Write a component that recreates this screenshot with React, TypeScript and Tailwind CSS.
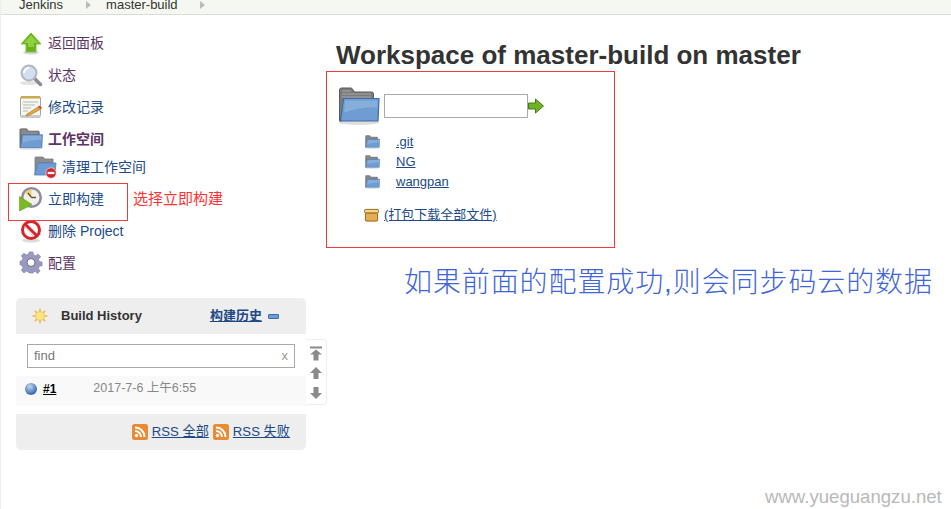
import { ReactNode } from "react";

const font = "font-['Liberation_Sans','Noto_Sans_CJK_SC',sans-serif]";

function FolderIcon({ className }: { className: string }) {
  return (
    <svg viewBox="0 0 42 38" className={className}>
      <ellipse cx="21" cy="35.500" rx="20" ry="2.500" fill="#dedede" />
      <path d="M1.500 34V3q0-2 2-2h10l3 4h17q2 0 2 2v6H6L4 34z" fill="#7b7b7d" stroke="#5a5a5a" />
      <path d="M4 4h9M4 7h29M4 10h29" stroke="#a8a8a8" />
      <path d="M5.500 11.500h35.500l-1 22.500H2.500z" fill="#6f9dd3" stroke="#3d6da8" strokeWidth="1.200" />
      <path d="M7 13.500h32.500l-.3 7q-15-1-33 5z" fill="#86aedb" />
    </svg>
  );
}

function UpArrow() {
  return (
    <svg viewBox="0 0 24 24" className="w-6 h-6">
      <ellipse cx="12" cy="21.500" rx="8" ry="2" fill="#d9d9d9" />
      <path d="M12 2 22 13h-5v8H7v-8H2z" fill="#6ab01c" stroke="#7cc136" />
      <path d="M12 4 19 12h-4v4H9v-4H5z" fill="#8fd13f" />
    </svg>
  );
}

function SearchIcon() {
  return (
    <svg viewBox="0 0 24 24" className="w-6 h-6">
      <ellipse cx="10" cy="20" rx="9" ry="2" fill="#e3e3e3" />
      <path d="m15 15 6.500 6.500" stroke="#8a8a92" strokeWidth="3.500" strokeLinecap="round" />
      <circle cx="10" cy="10" r="7.500" fill="#cfe0f2" stroke="#b4b7bf" strokeWidth="2" />
      <path d="M5 10a5 5 0 0 1 5-5" stroke="#fff" strokeWidth="2" fill="none" />
    </svg>
  );
}

function NotepadIcon() {
  return (
    <svg viewBox="0 0 24 24" className="w-6 h-6">
      <rect x="1.500" y="2" width="20" height="19" rx="1" fill="#f6f6f2" stroke="#a5a5a0" />
      <rect x="1.500" y="21" width="20" height="2" fill="#c9c9c9" />
      <rect x="2" y="1" width="19" height="2.500" fill="#c9a94e" />
      <path d="M4 7h15M4 10h12M4 13h8M4 16h5" stroke="#b5b5b5" />
      <path d="m8 19 11-7 3 2-11 6-4 1z" fill="#e5a83a" stroke="#a0702a" strokeWidth=".6" />
      <path d="m19 12 3 2 1-1.500-3-2z" fill="#d8443a" />
    </svg>
  );
}

function DeleteBadge({ cx, cy, r }: { cx: number; cy: number; r: number }) {
  return (
    <g>
      <circle cx={cx} cy={cy} r={r} fill="#d4242a" stroke="#f2f2f2" strokeWidth=".6" />
      <rect x={cx - r * 0.65} y={cy - r * 0.22} width={r * 1.3} height={r * 0.44} fill="#fff" />
    </g>
  );
}

function CleanIcon() {
  return (
    <svg viewBox="0 0 24 24" className="w-6 h-6">
      <path d="M2 19V3q0-1 1-1h7l2 2h8v4H7l-2 11z" fill="#8b8d90" stroke="#77797c" strokeWidth=".8" />
      <path d="M5 8h18l-1 12H1.500z" fill="#6f9dd3" stroke="#4f7db5" strokeWidth=".8" />
      <DeleteBadge cx={18} cy={18} r={5.200} />
    </svg>
  );
}

function BuildIcon() {
  return (
    <svg viewBox="0 0 24 24" className="w-6 h-6">
      <circle cx="12.500" cy="10.500" r="10.500" fill="#8b8ba3" />
      <circle cx="12.500" cy="10.500" r="8" fill="#f4f1e4" />
      <path d="M12.500 10.500V2.500a8 8 0 0 0-6.500 3.500z" fill="#f3d36b" />
      <path d="M12.500 10.500 9 6M12.500 10.500H17" stroke="#555" strokeWidth="1.300" />
      <path d="M.5 9.500 13 17.500.5 24z" fill="#79bb22" stroke="#5e9a15" strokeWidth=".6" />
    </svg>
  );
}

function NoEntryIcon() {
  return (
    <svg viewBox="0 0 24 24" className="w-6 h-6">
      <ellipse cx="12" cy="21.500" rx="9" ry="2" fill="#dcdcdc" />
      <circle cx="12" cy="11" r="8.500" fill="#fff" stroke="#d5252a" strokeWidth="3" />
      <path d="m6 5 12 12" stroke="#d5252a" strokeWidth="3" />
      <path d="m5 7 10 11" stroke="#bbb" strokeWidth=".8" />
    </svg>
  );
}

function GearIcon() {
  return (
    <svg viewBox="0 0 24 24" className="w-6 h-6">
      <path
        d="M10 1h4l.7 3.200 2.300 1 2.800-1.800 2.800 2.800L20 9l1 2.300 3 .7v4l-3 .7-1 2.300 1.800 2.800-2.800 2.800L17 22l-2.300 1-.7 1h-4l-.7-1L7 22l-2.800 1.800-2.800-2.800L3.200 18l-1-2.300L0 15v-4l2.200-.7 1-2.300-1.800-2.800 2.800-2.800L7 4.200l2.300-1z"
        transform="translate(1 0) scale(.92)"
        fill="#9a9ac0"
        stroke="#7a7aa0"
        strokeWidth=".6"
      />
      <circle cx="12" cy="11.500" r="4" fill="#fff" stroke="#666680" />
    </svg>
  );
}

function SunIcon() {
  return (
    <svg viewBox="0 0 16 16" className="w-4 h-4">
      <g stroke="#f0b060" strokeWidth="1.400">
        <path d="M8 .5v15M.5 8h15M2.700 2.700l10.600 10.600M13.300 2.700 2.700 13.300" />
      </g>
      <circle cx="8" cy="8" r="4.500" fill="#fbe77a" stroke="#f3c75c" />
    </svg>
  );
}

function RssIcon() {
  return (
    <svg viewBox="0 0 16 16" className="w-4 h-4 shrink-0">
      <rect width="16" height="16" rx="2.500" fill="#ea8a32" />
      <circle cx="4.500" cy="11.500" r="1.700" fill="#fff" />
      <path d="M3 7a6 6 0 0 1 6 6M3 3.500a9.500 9.500 0 0 1 9.500 9.500" stroke="#fff" strokeWidth="2" fill="none" />
    </svg>
  );
}

// visited links in the side panel show up purple
function TaskRow({ icon, label, bold, visited }: { icon: ReactNode; label: string; bold?: boolean; visited?: boolean }) {
  return (
    <div className="h-8 flex items-center gap-[5px]">
      {icon}
      <span className={`text-[14px] ${bold ? "font-bold" : ""} ${visited ? "text-[#5c3566]" : "text-[#204a87]"}`}>{label}</span>
    </div>
  );
}

function BuildHistory() {
  return (
    <div className="relative w-[290px] rounded-[5px] bg-[#eeeeee] text-[13px]">
      <div className="h-9 flex items-center pl-4">
        <SunIcon />
        <span className="ml-[13px] font-bold text-[#333]">Build History</span>
        <a className="ml-[68px] font-bold text-[#204a87] underline">构建历史</a>
        <span className="ml-[6px] w-[11px] h-[5px] rounded-[1px] bg-[#6f9dd3] border border-[#3d6da8]" />
      </div>
      <div className="bg-white h-[80px] flex flex-col">
        <div className="px-[11px] pt-[10px]">
          <div className="h-6 border border-[#a9a9a9] flex items-center justify-between px-[6px] text-[#777]">
            <span>find</span>
            <span className="text-[#999]">x</span>
          </div>
        </div>
        <div className="mt-2 h-[30px] bg-[#f9f9f9] flex items-center pl-[9px] pb-[5px]">
          <span className="w-3 h-3 rounded-full bg-[radial-gradient(circle_at_40%_30%,#c5d8ee,#3f74b5_65%,#2a5286)]" />
          <a className="ml-[6px] font-bold text-black underline text-[12px]">#1</a>
          <span className="ml-[37px] text-[#888] text-[12.500px]">2017-7-6 上午6:55</span>
        </div>
      </div>
      <div className="h-9 flex items-center justify-end pr-4 gap-1">
        <RssIcon />
        <a className="text-[#204a87] underline text-[13.200px]">RSS 全部</a>
        <RssIcon />
        <a className="text-[#204a87] underline text-[13.200px]">RSS 失败</a>
      </div>
      {/* page up/down buttons hang off the card's right edge */}
      <div className="absolute left-[290px] top-[41px] w-[21px] h-[66px] bg-white border border-l-0 border-[#eeeeee] rounded-r-[4px] flex flex-col items-center justify-center text-[#8a8a8a]">
        <svg viewBox="0 0 12 14" className="w-3 h-[15px]"><path d="M0 0h12v2H0zM6 3l6 5H8.500v6h-5V8H0z" fill="currentColor" /></svg>
        <svg viewBox="0 0 12 12" className="mt-[6px] w-3 h-3"><path d="m6 0 6 6H8.500v6h-5V6H0z" fill="currentColor" /></svg>
        <svg viewBox="0 0 12 12" className="mt-2 w-3 h-3"><path d="m6 12 6-6H8.500V0h-5v6H0z" fill="currentColor" /></svg>
      </div>
    </div>
  );
}

function FileRow({ name }: { name: string }) {
  return (
    <div className="h-[20px] flex items-center">
      <FolderIcon className="w-[15px] h-[14px]" />
      <a className="ml-4 text-[#204a87] underline">{name}</a>
    </div>
  );
}

export default function App() {
  return (
    <div className={`relative w-[951px] h-[509px] overflow-hidden bg-white border-l border-[#eeeeee] ${font}`}>
      <div className="h-[15px] bg-[#f5f8f1] border-b border-[#dcdcd6] flex items-end text-[13px] text-[#333] overflow-hidden pl-[18px]">
        <div className="flex items-center h-[13px] leading-[13px] -translate-y-[3px]">
          <span>Jenkins</span>
          <span className="ml-[23px] border-y-[4px] border-l-[5px] border-y-transparent border-l-[#bbb]" />
          <span className="ml-[15px]">master-build</span>
          <span className="ml-[22px] border-y-[4px] border-l-[5px] border-y-transparent border-l-[#bbb]" />
        </div>
      </div>

      <div className="flex">
        <div className="w-[325px] shrink-0 pt-3 pl-[15px]">
          <div className="pl-[3px]">
            <TaskRow icon={<UpArrow />} label="返回面板" visited />
            <TaskRow icon={<SearchIcon />} label="状态" visited />
            <TaskRow icon={<NotepadIcon />} label="修改记录" />
            <TaskRow icon={<FolderIcon className="w-6 h-[22px]" />} label="工作空间" bold visited />
            <div className="pl-[14px] h-6 mb-1 flex items-center"><TaskRow icon={<CleanIcon />} label="清理工作空间" /></div>
            <TaskRow icon={<BuildIcon />} label="立即构建" />
            <TaskRow icon={<NoEntryIcon />} label="删除 Project" />
            <TaskRow icon={<GearIcon />} label="配置" visited />
          </div>
          <div className="mt-[19px]"><BuildHistory /></div>
        </div>

        <div className="pl-[2px] flex-1 whitespace-nowrap">
          <h1 className="mt-[26px] ml-[8px] text-[26px] leading-[29px] font-bold text-[#333]">Workspace of master-build on master</h1>
          <div className="mt-[17px] pl-[10px] text-[13px]">
            <div className="flex items-center h-[38px]">
              <FolderIcon className="w-[42px] h-[38px]" />
              <div className="ml-1 -mt-[1px] w-[144px] h-6 border border-[#a9a9a9] bg-white" />
              <svg viewBox="0 0 16 16" className="w-4 h-4">
                <path d="M.5 5h7V1l8 7-8 7v-4h-7z" fill="#6fb226" stroke="#3f7d12" />
              </svg>
            </div>
            <div className="mt-[7px] pl-[27px]">
              <FileRow name=".git" />
              <FileRow name="NG" />
              <FileRow name="wangpan" />
            </div>
            <div className="mt-[13px] pl-[26px] flex items-center">
              <svg viewBox="0 0 16 14" className="w-[15px] h-[14px]">
                <rect x=".5" y="1" width="15" height="4" rx="1.500" fill="#f2d58e" stroke="#98610f" />
                <rect x="1.500" y="5" width="13" height="8.500" rx="1" fill="#e6ab55" stroke="#98610f" />
              </svg>
              <a className="ml-[5px] text-[#204a87] underline">(打包下载全部文件)</a>
            </div>
          </div>
        </div>
      </div>

      {/* annotations pasted on top of the screenshot */}
      <div className="absolute left-[7px] top-[183px] w-[120px] h-[38px] border border-[#f03c3c]" />
      <span className="absolute left-[132px] top-[189px] text-[15px] leading-[20px] text-[#ff3333]">选择立即构建</span>
      <div className="absolute left-[325px] top-[71px] w-[289px] h-[177px] border border-[#f03c3c]" />
      <span className="absolute left-[403px] top-[264px] text-[28px] leading-[38px] font-light tracking-[.9px] text-[#3f66d8] whitespace-nowrap">如果前面的配置成功,则会同步码云的数据</span>
      <span className="absolute left-[764px] top-[486px] text-[18.600px] leading-[22px] text-[#b9b9b9] whitespace-nowrap">www.yueguangzu.net</span>
    </div>
  );
}
